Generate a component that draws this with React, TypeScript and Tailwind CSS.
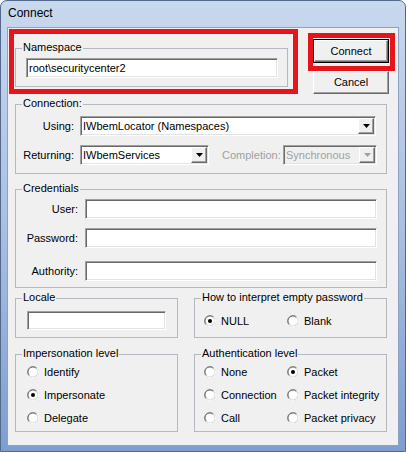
import React from 'react'

const sunken =
  'border border-t-[#a0a0a0] border-l-[#a0a0a0] border-b-white border-r-white shadow-[inset_1px_1px_0_#696969,inset_-1px_-1px_0_#e3e3e3]'
const raised =
  'border border-t-white border-l-white border-r-[#696969] border-b-[#696969] shadow-[inset_-1px_-1px_0_#a0a0a0]'

function GroupBox({ label, className, children }: { label: string; className: string; children?: React.ReactNode }) {
  return (
    <div className={`relative border border-[#b4b9c0] ${className}`}>
      <span className="absolute -top-[8px] left-[6px] bg-[#f0f0f0] px-[1px] leading-[13px]">{label}</span>
      {children}
    </div>
  )
}

function TextBox({ className, value }: { className: string; value?: string }) {
  return (
    <div className={`flex items-center bg-white pl-[1px] ${sunken} ${className}`}>
      <span className="leading-[13px]">{value}</span>
    </div>
  )
}

function Arrow({ disabled }: { disabled?: boolean }) {
  return (
    <div className={`my-[1px] mr-[1px] flex h-[16px] w-[16px] items-center justify-center bg-[#f0f0f0] ${raised}`}>
      <svg width="7" height="4" viewBox="0 0 7 4">
        <path d="M0 0h7L3.5 4z" fill={disabled ? '#a0a0a0' : '#000'} />
      </svg>
    </div>
  )
}

function Combo({ className, value, disabled }: { className: string; value: string; disabled?: boolean }) {
  return (
    <div
      className={`flex h-[20px] items-center justify-between ${sunken} ${
        disabled ? 'bg-[#f0f0f0] text-[#a0a0a0]' : 'bg-white text-black'
      } ${className}`}
    >
      <span className="pl-[2px] leading-[13px]">{value}</span>
      <Arrow disabled={disabled} />
    </div>
  )
}

function Radio({ label, checked, className = '' }: { label: string; checked?: boolean; className?: string }) {
  return (
    <div className={`flex h-[16px] items-center gap-[5px] ${className}`}>
      <svg width="12" height="12" viewBox="0 0 12 12">
        <circle cx="6" cy="6" r="5.5" fill="#fff" stroke="#a0a0a0" />
        <path d="M10 2A5.5 5.5 0 0 1 2 10" fill="none" stroke="#fff" />
        <path d="M2.4 9.3A4.5 4.5 0 0 1 9.3 2.4" fill="none" stroke="#696969" />
        <path d="M9.3 2.4A4.5 4.5 0 0 1 2.4 9.3" fill="none" stroke="#e3e3e3" />
        {checked && <circle cx="6" cy="6" r="2" fill="#000" />}
      </svg>
      <span className="leading-[13px]">{label}</span>
    </div>
  )
}

export default function App() {
  return (
    <div className="flex h-[452px] w-[406px] flex-col rounded-t-[7px] border border-[#52698c] bg-linear-to-b from-[#c8d8ee] via-[#a9c0e1] to-[#7d9ed0] font-['Liberation_Sans',Arial,sans-serif] text-[11px] text-black">
      <div className="h-[26px] pl-[7px] pt-[5px] text-[12px] leading-[14px]">Connect</div>

      <div className="mx-[6px] mb-[5px] flex flex-1 flex-col border border-[#8da2c2] bg-[#f0f0f0]">
        {/* namespace + buttons */}
        <div className="flex pl-[1px] pt-[1px]">
          <div className="h-[65px] w-[289px] border-[5px] border-[#e8141c] pl-[1px] pt-[14px]">
            <GroupBox label="Namespace" className="h-[39px] w-[273px] pl-[10px] pt-[9px]">
              <TextBox className="h-[20px] w-[252px] pl-[2px]" value="root\securitycenter2" />
            </GroupBox>
          </div>
          <div className="ml-[10px] flex flex-col pt-[4px]">
            <div className="h-[38px] w-[87px] border-[5px] border-[#e8141c] pt-[1px]">
              <div className="h-[24px] w-[76px] border border-black">
                <div className={`flex h-full items-center justify-center bg-[#f0f0f0] ${raised}`}>Connect</div>
              </div>
            </div>
            <div className={`ml-[5px] flex h-[23px] w-[76px] items-center justify-center bg-[#f0f0f0] ${raised}`}>
              Cancel
            </div>
          </div>
        </div>

        {/* connection */}
        <GroupBox label="Connection:" className="ml-[7px] mt-[10px] h-[70px] w-[372px] pt-[11px]">
          <div className="flex items-center">
            <span className="w-[58px] text-right">Using:</span>
            <Combo className="ml-[6px] w-[296px]" value="IWbemLocator (Namespaces)" />
          </div>
          <div className="mt-[9px] flex items-center">
            <span className="w-[58px] text-right">Returning:</span>
            <Combo className="ml-[6px] w-[129px]" value="IWbemServices" />
            <span className="ml-[13px] w-[61px] text-[#a0a0a0]">Completion:</span>
            <Combo className="w-[94px]" value="Synchronous" disabled />
          </div>
        </GroupBox>

        {/* credentials */}
        <GroupBox label="Credentials" className="ml-[7px] mt-[15px] h-[99px] w-[372px] pt-[9px]">
          <div className="flex items-center">
            <span className="w-[62px] text-right">User:</span>
            <TextBox className="ml-[7px] h-[20px] w-[292px]" />
          </div>
          <div className="mt-[9px] flex items-center">
            <span className="w-[62px] text-right">Password:</span>
            <TextBox className="ml-[7px] h-[20px] w-[292px]" />
          </div>
          <div className="mt-[13px] flex items-center">
            <span className="w-[62px] text-right">Authority:</span>
            <TextBox className="ml-[7px] h-[20px] w-[292px]" />
          </div>
        </GroupBox>

        {/* locale + empty password */}
        <div className="ml-[7px] mt-[10px] flex">
          <GroupBox label="Locale" className="h-[40px] w-[163px] pl-[11px] pt-[12px]">
            <TextBox className="h-[19px] w-[139px]" />
          </GroupBox>
          <GroupBox label="How to interpret empty password" className="ml-[16px] h-[40px] w-[193px] pl-[9px] pt-[14px]">
            <div className="flex">
              <Radio label="NULL" checked className="w-[83px]" />
              <Radio label="Blank" />
            </div>
          </GroupBox>
        </div>

        {/* impersonation + authentication */}
        <div className="ml-[7px] mt-[16px] flex">
          <GroupBox label="Impersonation level" className="flex h-[78px] w-[163px] flex-col gap-[7px] pl-[11px] pt-[9px]">
            <Radio label="Identify" />
            <Radio label="Impersonate" checked />
            <Radio label="Delegate" />
          </GroupBox>
          <GroupBox label="Authentication level" className="ml-[16px] flex h-[78px] w-[193px] pl-[9px] pt-[9px]">
            <div className="flex w-[83px] flex-col gap-[7px]">
              <Radio label="None" />
              <Radio label="Connection" />
              <Radio label="Call" />
            </div>
            <div className="flex flex-col gap-[7px]">
              <Radio label="Packet" checked />
              <Radio label="Packet integrity" />
              <Radio label="Packet privacy" />
            </div>
          </GroupBox>
        </div>
      </div>
    </div>
  )
}
